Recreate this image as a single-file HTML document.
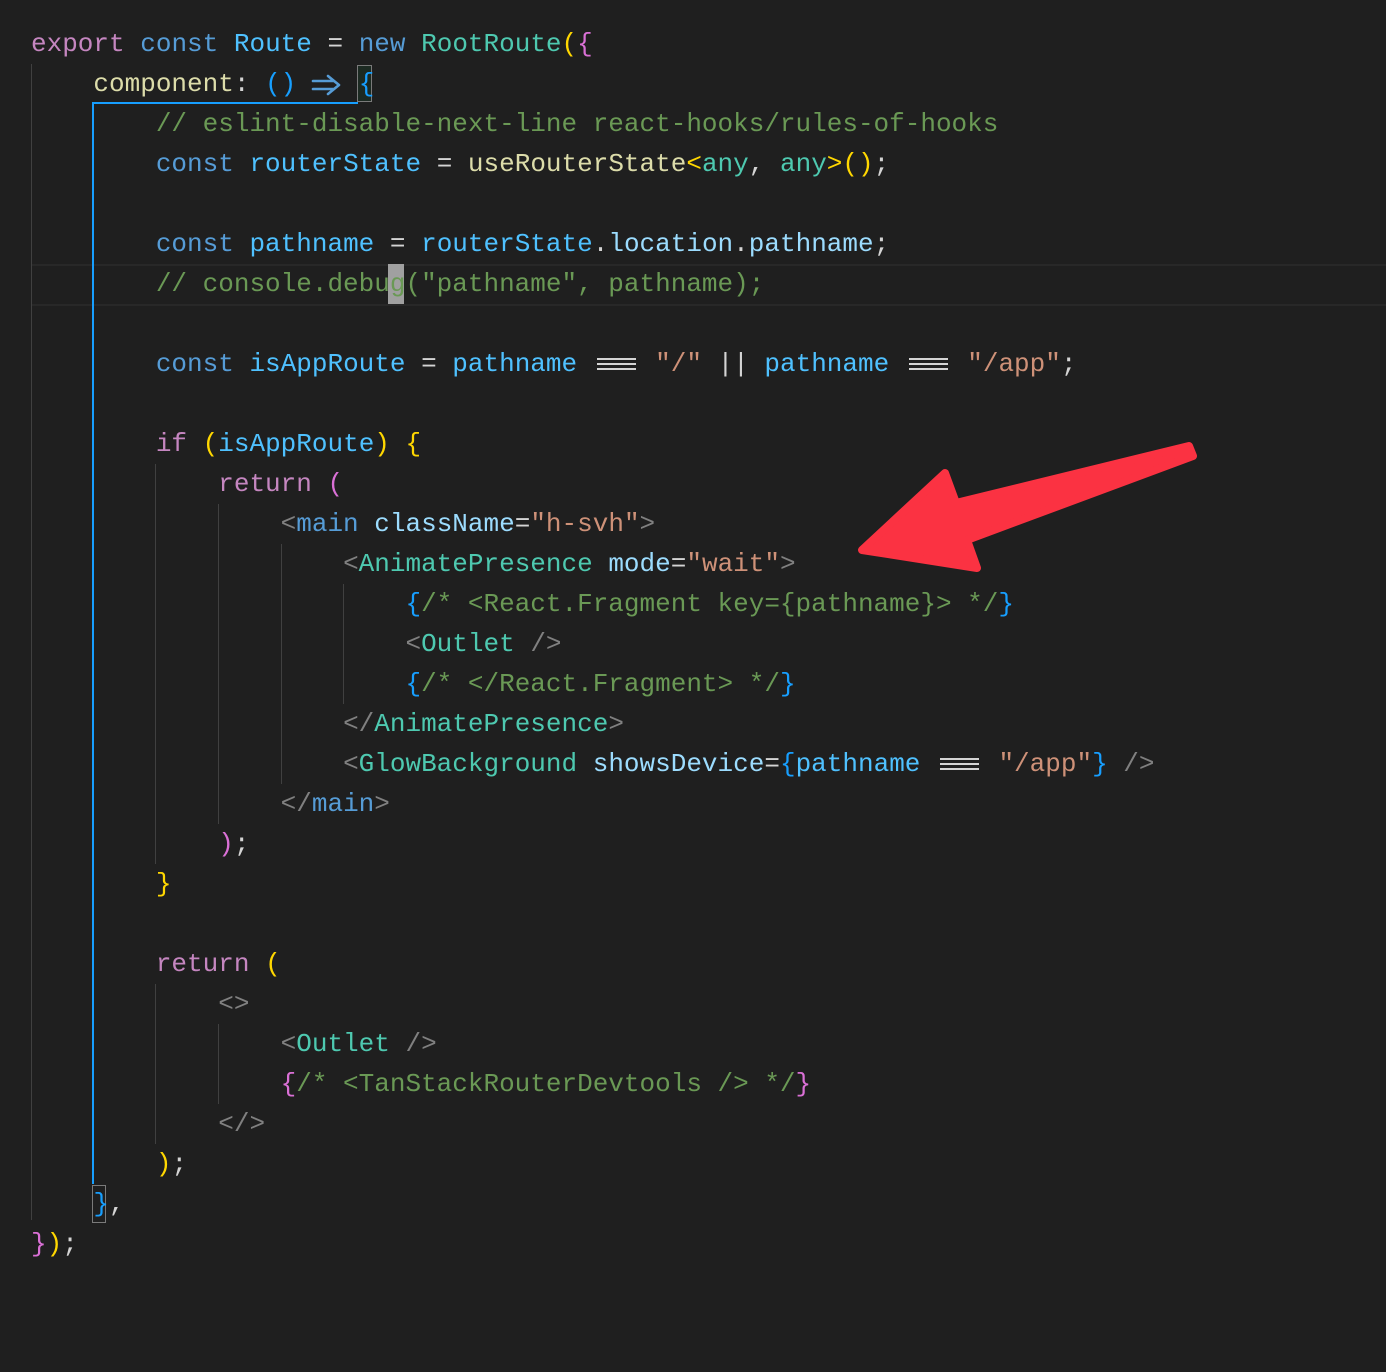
<!DOCTYPE html>
<html><head><meta charset="utf-8"><style>
html,body{margin:0;padding:0;background:#1f1f1f;width:1386px;height:1372px;overflow:hidden;position:relative}
.l{position:absolute;left:31px;height:40px;line-height:40px;font-family:"Liberation Mono","DejaVu Sans Mono",monospace;font-size:26px;white-space:pre;color:#d4d4d4}
.k{color:#c586c0}.c{color:#569cd6}.v{color:#4fc1ff}.p{color:#9cdcfe}.f{color:#dcdcaa}.t{color:#4ec9b0}.s{color:#ce9178}.m{color:#6a9955}
.y{color:#ffd700}.pk{color:#da70d6}.b{color:#179fff}.g{color:#808080}
.eq{color:transparent;background:linear-gradient(#d4d4d4,#d4d4d4) 4px 9px/calc(100% - 8px) 2px no-repeat,linear-gradient(#d4d4d4,#d4d4d4) 4px 14px/calc(100% - 8px) 2px no-repeat,linear-gradient(#d4d4d4,#d4d4d4) 4px 19px/calc(100% - 8px) 2px no-repeat}
.gd{position:absolute;width:1px;background:#404040}
.tr{color:transparent}
</style></head><body>
<div style="position:absolute;left:31px;top:264px;width:1355px;height:38px;border-top:2px solid #282828;border-bottom:2px solid #282828;background:#1f1f1f"></div>
<div class="gd" style="left:31px;top:64px;height:1156px"></div>
<div style="position:absolute;left:92px;top:102px;width:2px;height:1082px;background:#179fff"></div>
<div style="position:absolute;left:92px;top:102px;width:266px;height:2px;background:#179fff"></div>
<div style="position:absolute;left:357px;top:65px;width:15px;height:37px;border:1px solid #7a7a7a;box-sizing:border-box;background:#1c2a22"></div>
<div style="position:absolute;left:92px;top:1185px;width:14px;height:38px;border:1px solid #7a7a7a;box-sizing:border-box"></div>
<div style="position:absolute;left:388px;top:264px;width:16px;height:40px;background:#a0a0a0"></div>
<div class="gd" style="left:155px;top:464px;height:400px"></div>
<div class="gd" style="left:218px;top:504px;height:320px"></div>
<div class="gd" style="left:281px;top:544px;height:240px"></div>
<div class="gd" style="left:343px;top:584px;height:120px"></div>
<div class="gd" style="left:155px;top:984px;height:160px"></div>
<div class="gd" style="left:218px;top:1024px;height:80px"></div>

<div class="l" style="top:24px"><span class="k">export</span> <span class="c">const</span> <span class="v">Route</span> = <span class="c">new</span> <span class="t">RootRoute</span><span class="y">(</span><span class="pk">{</span></div>
<div class="l" style="top:64px">    <span class="f">component</span>: <span class="b">()</span> <span class="tr">=&gt;</span> <span class="b">{</span></div>
<div class="l" style="top:104px">        <span class="m">// eslint-disable-next-line react-hooks/rules-of-hooks</span></div>
<div class="l" style="top:144px">        <span class="c">const</span> <span class="v">routerState</span> = <span class="f">useRouterState</span><span class="y">&lt;</span><span class="t">any</span>, <span class="t">any</span><span class="y">&gt;()</span>;</div>
<div class="l" style="top:224px">        <span class="c">const</span> <span class="v">pathname</span> = <span class="v">routerState</span>.<span class="p">location</span>.<span class="p">pathname</span>;</div>
<div class="l" style="top:264px">        <span class="m">// console.debug("pathname", pathname);</span></div>
<div class="l" style="top:344px">        <span class="c">const</span> <span class="v">isAppRoute</span> = <span class="v">pathname</span> <span class="eq">===</span> <span class="s">"/"</span> || <span class="v">pathname</span> <span class="eq">===</span> <span class="s">"/app"</span>;</div>
<div class="l" style="top:424px">        <span class="k">if</span> <span class="y">(</span><span class="v">isAppRoute</span><span class="y">)</span> <span class="y">{</span></div>
<div class="l" style="top:464px">            <span class="k">return</span> <span class="pk">(</span></div>
<div class="l" style="top:504px">                <span class="g">&lt;</span><span class="c">main</span> <span class="p">className</span>=<span class="s">"h-svh"</span><span class="g">&gt;</span></div>
<div class="l" style="top:544px">                    <span class="g">&lt;</span><span class="t">AnimatePresence</span> <span class="p">mode</span>=<span class="s">"wait"</span><span class="g">&gt;</span></div>
<div class="l" style="top:584px">                        <span class="b">{</span><span class="m">/* &lt;React.Fragment key={pathname}&gt; */</span><span class="b">}</span></div>
<div class="l" style="top:624px">                        <span class="g">&lt;</span><span class="t">Outlet</span> <span class="g">/&gt;</span></div>
<div class="l" style="top:664px">                        <span class="b">{</span><span class="m">/* &lt;/React.Fragment&gt; */</span><span class="b">}</span></div>
<div class="l" style="top:704px">                    <span class="g">&lt;/</span><span class="t">AnimatePresence</span><span class="g">&gt;</span></div>
<div class="l" style="top:744px">                    <span class="g">&lt;</span><span class="t">GlowBackground</span> <span class="p">showsDevice</span>=<span class="b">{</span><span class="v">pathname</span> <span class="eq">===</span> <span class="s">"/app"</span><span class="b">}</span> <span class="g">/&gt;</span></div>
<div class="l" style="top:784px">                <span class="g">&lt;/</span><span class="c">main</span><span class="g">&gt;</span></div>
<div class="l" style="top:824px">            <span class="pk">)</span>;</div>
<div class="l" style="top:864px">        <span class="y">}</span></div>
<div class="l" style="top:944px">        <span class="k">return</span> <span class="y">(</span></div>
<div class="l" style="top:984px">            <span class="g">&lt;&gt;</span></div>
<div class="l" style="top:1024px">                <span class="g">&lt;</span><span class="t">Outlet</span> <span class="g">/&gt;</span></div>
<div class="l" style="top:1064px">                <span class="pk">{</span><span class="m">/* &lt;TanStackRouterDevtools /&gt; */</span><span class="pk">}</span></div>
<div class="l" style="top:1104px">            <span class="g">&lt;/&gt;</span></div>
<div class="l" style="top:1144px">        <span class="y">)</span>;</div>
<div class="l" style="top:1184px">    <span class="b">}</span>,</div>
<div class="l" style="top:1224px"><span class="pk">}</span><span class="y">)</span>;</div>

<svg style="position:absolute;left:0;top:0" width="1386" height="1372">
<g stroke="#569cd6" stroke-width="2.6" fill="none" stroke-linecap="round" stroke-linejoin="round">
<path d="M313 81 H334 M313 89 H334 M328 76 L339 85 L328 94"/>
</g>
<polygon points="862,550 945,473 956,503 1189,446 1193,456 967,540 977,568" fill="#fb3242" stroke="#fb3242" stroke-width="8" stroke-linejoin="round"/>
</svg>
</body></html>
